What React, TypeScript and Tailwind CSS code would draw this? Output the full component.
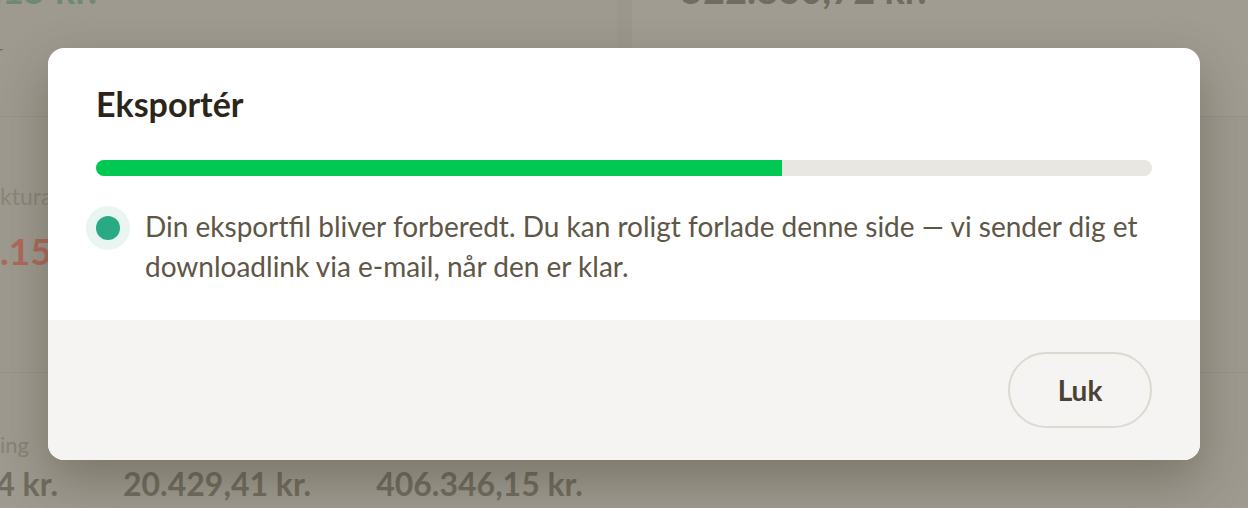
import React from "react";

// Dashboard values shown behind the dialog
const bottomValues = ["20.429,41 kr.", "406.346,15 kr."];

// Text whose start lies off the left edge: right-aligned in a box of the given width
function Clip({ className, children }: { className: string; children: React.ReactNode }) {
  return <div className={`flex justify-end whitespace-nowrap ${className}`}>{children}</div>;
}

function Backdrop() {
  return (
    <div className="flex h-full flex-col">
      {/* top row */}
      <div className="-mt-[35px] flex h-[152px] border-b border-[#97938a]">
        <div className="flex w-[617px] flex-col">
          <Clip className="w-[97px] text-[38px] font-bold leading-[48px] text-[#6e8a77]">406.346,15 kr.</Clip>
          <Clip className="mt-[20px] w-[4px] text-[20px] leading-[28px] text-[#6f6a5e]">Ændring —</Clip>
        </div>
        <div className="w-[15px] bg-[#9b978c]" />
        <div className="flex flex-1 flex-col bg-[#a09c91] pl-[49px]">
          <div className="text-[38px] font-bold leading-[48px] text-[#716c5f]">522.830,72 kr.</div>
          <div className="mt-[27px] text-[20px] leading-[28px] text-[#888376]">Udbetalinger i alt</div>
        </div>
      </div>
      {/* middle row */}
      <div className="flex h-[256px] flex-col border-b border-[#97938a] pt-[64px]">
        <div className="flex whitespace-nowrap text-[23px] leading-[30px] text-[#8b8679]">
          <span className="flex w-0 justify-end">Fa</span>
          <span>kturaer</span>
        </div>
        <div className="mt-[18px] flex whitespace-nowrap text-[37px] font-bold leading-[44px] text-[#b0695c]">
          <span className="flex w-0 justify-end">−3</span>
          <span>.154,20 kr.</span>
        </div>
      </div>
      {/* bottom row */}
      <div className="flex flex-col pt-[57px]">
        <Clip className="w-[29px] text-[22px] leading-[29px] text-[#888376]">Udestående betaling</Clip>
        <div className="mt-[5px] flex gap-[65px] text-[32px] font-bold leading-[40px] text-[#716c5f]">
          <Clip className="w-[58px]">1.254 kr.</Clip>
          {bottomValues.map((v) => (
            <span key={v}>{v}</span>
          ))}
        </div>
      </div>
    </div>
  );
}

export default function App() {
  const progress = 65;

  return (
    <div className="relative h-[508px] w-[1248px] overflow-hidden bg-[#9e9a8f] font-['Lato',sans-serif]">
      <Backdrop />

      {/* Dialog */}
      <div className="absolute inset-0 flex items-center justify-center">
        <div className="w-[1152px] overflow-hidden rounded-[16px] bg-white shadow-[0_20px_50px_rgba(40,35,20,0.3)]">
          <div className="px-[48px] pb-[34px] pt-[34px]">
            <h2 className="text-[34px] font-bold leading-[44px] text-[#2b2618]">Eksportér</h2>

            <div className="mt-[34px] h-[16px] w-full overflow-hidden rounded-full bg-[#e9e7e2]">
              <div className="h-full bg-[#00c853]" style={{ width: `${progress}%` }} />
            </div>

            <div className="mt-[30px] flex items-start gap-[15px]">
              <div className="-ml-[10px] flex h-[44px] w-[44px] shrink-0 items-center justify-center rounded-full bg-[#e8f5f0]">
                <div className="h-[24px] w-[24px] rounded-full bg-[#2aaa84]" />
              </div>
              <p className="text-[28px] leading-[40px] text-[#5e5646]">
                Din eksportfil bliver forberedt. Du kan roligt forlade denne side — vi sender dig et downloadlink via e-mail, når den er klar.
              </p>
            </div>
          </div>

          <div className="flex justify-end bg-[#f5f4f2] px-[48px] py-[32px]">
            <button className="h-[76px] w-[144px] rounded-full border-2 border-[#dcd9d1] text-[28px] font-bold text-[#4a4233]">
              Luk
            </button>
          </div>
        </div>
      </div>
    </div>
  );
}
